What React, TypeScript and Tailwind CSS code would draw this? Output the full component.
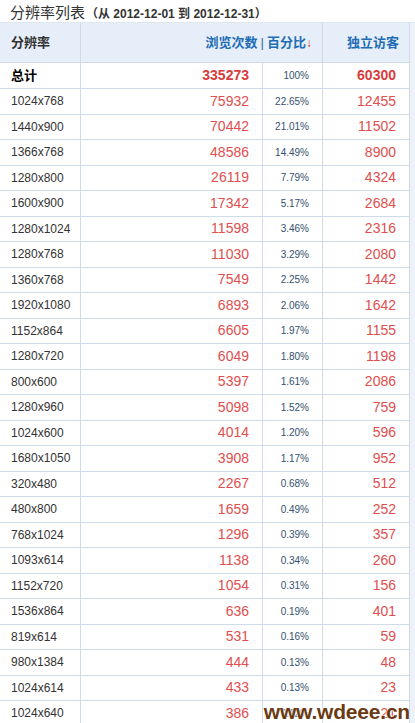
import React from "react";

type Row = { res: string; views: string; pct: string; visitors: string };

const rows: Row[] = [
  { res: "1024x768", views: "75932", pct: "22.65%", visitors: "12455" },
  { res: "1440x900", views: "70442", pct: "21.01%", visitors: "11502" },
  { res: "1366x768", views: "48586", pct: "14.49%", visitors: "8900" },
  { res: "1280x800", views: "26119", pct: "7.79%", visitors: "4324" },
  { res: "1600x900", views: "17342", pct: "5.17%", visitors: "2684" },
  { res: "1280x1024", views: "11598", pct: "3.46%", visitors: "2316" },
  { res: "1280x768", views: "11030", pct: "3.29%", visitors: "2080" },
  { res: "1360x768", views: "7549", pct: "2.25%", visitors: "1442" },
  { res: "1920x1080", views: "6893", pct: "2.06%", visitors: "1642" },
  { res: "1152x864", views: "6605", pct: "1.97%", visitors: "1155" },
  { res: "1280x720", views: "6049", pct: "1.80%", visitors: "1198" },
  { res: "800x600", views: "5397", pct: "1.61%", visitors: "2086" },
  { res: "1280x960", views: "5098", pct: "1.52%", visitors: "759" },
  { res: "1024x600", views: "4014", pct: "1.20%", visitors: "596" },
  { res: "1680x1050", views: "3908", pct: "1.17%", visitors: "952" },
  { res: "320x480", views: "2267", pct: "0.68%", visitors: "512" },
  { res: "480x800", views: "1659", pct: "0.49%", visitors: "252" },
  { res: "768x1024", views: "1296", pct: "0.39%", visitors: "357" },
  { res: "1093x614", views: "1138", pct: "0.34%", visitors: "260" },
  { res: "1152x720", views: "1054", pct: "0.31%", visitors: "156" },
  { res: "1536x864", views: "636", pct: "0.19%", visitors: "401" },
  { res: "819x614", views: "531", pct: "0.16%", visitors: "59" },
  { res: "980x1384", views: "444", pct: "0.13%", visitors: "48" },
  { res: "1024x614", views: "433", pct: "0.13%", visitors: "23" },
  { res: "1024x640", views: "386", pct: "0.12%", visitors: "21" },
];

const font = { fontFamily: '"Liberation Sans", Arial, "Noto Sans CJK SC", sans-serif' };

const App = () => {
  return (
    <div
      className="relative w-[415px] h-[723px] overflow-hidden bg-white text-[#333]"
      style={font}
    >
      {/* title */}
      <div className="h-[23px] flex items-end pl-[10px] pb-[2px] border-b border-[#dfe6ee]">
        <span className="text-[15px] leading-none">分辨率列表</span>
        <span className="text-[12px] font-bold leading-none ml-[1px]">（从 2012-12-01 到 2012-12-31）</span>
      </div>

      <div className="flex">
        <div className="w-[410px] border-r border-[#cfdbe9]">
          {/* header */}
          <div className="grid grid-cols-[81px_242px_86px] h-[40px] bg-[#e5eef9] border-b border-[#cfdbe9]">
            <div className="border-r border-[#cfdbe9] flex items-center pl-[11px] text-[13px] font-bold text-[#333]">
              分辨率
            </div>
            <div className="border-r border-[#cfdbe9] flex items-center justify-end pr-[10px] text-[13px] font-bold text-[#1f6db5]">
              浏览次数<span className="mx-[3px] font-normal">|</span>百分比
              <span className="text-[#e04040] font-normal text-[12px]">↓</span>
            </div>
            <div className="flex items-center justify-end pr-[10px] text-[13px] font-bold text-[#1f6db5]">
              独立访客
            </div>
          </div>

          {/* total */}
          <div className="grid grid-cols-[81px_182px_60px_86px] h-[26px] border-b border-[#cfdbe9]">
            <div className="border-r border-[#cfdbe9] flex items-center pl-[11px] text-[13px] font-bold text-black">
              总计
            </div>
            <div className="border-r border-[#cfdbe9] flex items-center justify-end pr-[13px] text-[14px] font-bold text-[#d83c3c]">
              335273
            </div>
            <div className="border-r border-[#cfdbe9] flex items-center justify-end pr-[13px] text-[10px] text-[#34506e]">
              100%
            </div>
            <div className="flex items-center justify-end pr-[13px] text-[14px] font-bold text-[#d83c3c]">
              60300
            </div>
          </div>

          {rows.map((r) => (
            <div
              key={r.res}
              className="grid grid-cols-[81px_182px_60px_86px] h-[25.5px] border-b border-[#cfdbe9]"
            >
              <div className="border-r border-[#cfdbe9] flex items-center pl-[11px] text-[12px] text-[#333]">
                {r.res}
              </div>
              <div className="border-r border-[#cfdbe9] flex items-center justify-end pr-[13px] text-[14px] text-[#e04e4e]">
                {r.views}
              </div>
              <div className="border-r border-[#cfdbe9] flex items-center justify-end pr-[13px] text-[10px] text-[#34506e]">
                {r.pct}
              </div>
              <div className="flex items-center justify-end pr-[13px] text-[14px] text-[#e04e4e]">
                {r.visitors}
              </div>
            </div>
          ))}
        </div>
        <div className="flex-1 bg-[#edf2f8]" />
      </div>

      {/* watermark */}
      <div
        className="absolute right-[5px] bottom-[1px] text-[21px] font-bold leading-none text-[#6b3a12] tracking-[-0.2px]"
        style={{ textShadow: "0 0 2px #fff, 0 0 2px #fff" }}
      >
        www.wdeee.cn
      </div>
    </div>
  );
};

export default App;
